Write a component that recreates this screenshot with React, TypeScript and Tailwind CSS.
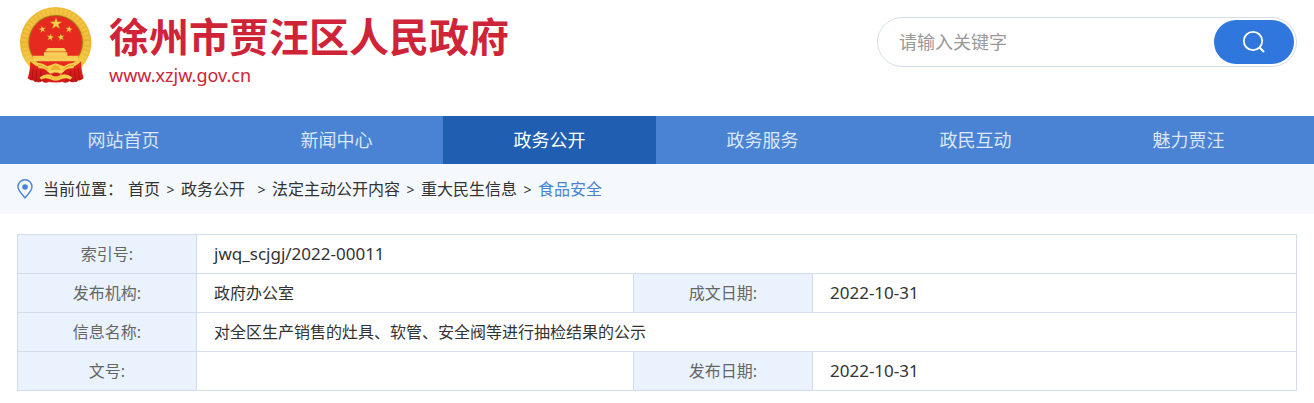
import React from 'react';

const NAV_ITEMS = ['网站首页', '新闻中心', '政务公开', '政务服务', '政民互动', '魅力贾汪'];
const ACTIVE_ITEM = '政务公开';

const CRUMBS = ['首页', '政务公开', '法定主动公开内容', '重大民生信息'];

const STAR = 'M0 -10 L2.4 -3.2 L9.5 -3.1 L3.8 1.2 L5.9 8.1 L0 4 L-5.9 8.1 L-3.8 1.2 L-9.5 -3.1 L-2.4 -3.2 Z';

const Emblem: React.FC = () => (
  <svg viewBox="30 15 216 234" className="w-[72px] h-[78px] shrink-0" aria-hidden="true">
    <defs>
      <linearGradient id="gold" x1="0" y1="0" x2="0" y2="1">
        <stop offset="0" stopColor="#efbc38" />
        <stop offset="0.5" stopColor="#eab32c" />
        <stop offset="1" stopColor="#f8d04a" />
      </linearGradient>
      <linearGradient id="drape" x1="0" y1="0" x2="0" y2="1">
        <stop offset="0" stopColor="#e8281f" />
        <stop offset="1" stopColor="#c41417" />
      </linearGradient>
    </defs>
    {/* Wreath */}
    <circle cx="137" cy="125" r="107" fill="url(#gold)" />
    <circle cx="137" cy="125" r="94" fill="none" stroke="#fbdc6c" strokeWidth="16" strokeDasharray="7 6" opacity="0.35" />
    <circle cx="137" cy="124" r="82" fill="#a8741c" />
    <circle cx="137" cy="124" r="79" fill="#e62a20" />
    {/* Stars */}
    <g fill="#f8cf4c" stroke="#b9751a" strokeWidth="0.6">
      <path d={STAR} transform="translate(138 68) scale(1.9)" />
      <path d={STAR} transform="translate(97 85) rotate(-12) scale(1.1)" />
      <path d={STAR} transform="translate(177 85) rotate(12) scale(1.1)" />
      <path d={STAR} transform="translate(121 109) rotate(10) scale(1.1)" />
      <path d={STAR} transform="translate(153 109) rotate(-10) scale(1.1)" />
    </g>
    {/* Gate */}
    <path d="M113 141 H162 L170 151 H105 Z" fill="#f8d05a" />
    <path d="M109 151 H166 V155 H109 Z" fill="#e3aa3a" />
    <path d="M102 154 H172 V164 H206 L202 181 H72 L68 164 H102 Z" fill="#f9ce58" />
    <path d="M72 168 H203" stroke="#eebb45" strokeWidth="2" />
    {/* Drapery */}
    <path d="M61 181 Q80 203 112 199 L116 244 Q100 247 96 240 Q90 246 80 242 Q74 245 69 238 Q61 240 53 232 Q60 211 61 181 Z" fill="url(#drape)" />
    <path d="M213 181 Q194 203 162 199 L158 244 Q174 247 178 240 Q184 246 194 242 Q200 245 205 238 Q213 240 221 232 Q214 211 213 181 Z" fill="url(#drape)" />
    <path d="M70 200 L66 235 M80 206 L78 239 M92 210 V240 M204 200 L208 235 M194 206 L196 239 M182 210 V240" stroke="#9d0d12" strokeWidth="2" />
    <path d="M105 213 H169 L165 241 Q137 248 109 241 Z" fill="#d41c1b" />
    {/* Ribbon and cog */}
    <path d="M80 186 Q98 185 112 196 L137 187 L162 196 Q176 185 196 186 L190 202 Q171 200 162 211 H112 Q103 200 86 202 Z" fill="#f8cd4a" />
    <path d="M84 192 Q101 193 114 204 M192 192 Q173 193 160 204" stroke="#c88a1f" strokeWidth="2" fill="none" />
    <path d="M123 201 L129 193 L137 190 L145 193 L151 201 L155 210 H119 Z" fill="#eeb02c" stroke="#fbdc6c" strokeWidth="2" />
    <path d="M112 211 Q137 201 162 211 L154 218 Q137 211 120 218 Z" fill="#fbd65c" />
    <path d="M89 229 Q108 216 121 221 L126 236 Q104 227 93 236 Z" fill="#f8cd4a" />
    <path d="M187 229 Q168 216 155 221 L148 236 Q170 227 181 236 Z" fill="#f8cd4a" />
    <path d="M118 222 L128 217 H147 L157 222 L149 237 Q137 242 125 237 Z" fill="#f3c142" />
    <path d="M122 221 L131 216 H144 L153 221 L143 226 H132 Z" fill="#d41c1b" />
  </svg>
);

const Header: React.FC = () => (
  <header className="max-w-[1280px] mx-auto h-[116px] flex items-start justify-between">
    <a href="#" className="flex items-start gap-[17px] pt-[6px] pl-[3px] text-[#cf2338]">
      <Emblem />
      <div className="pt-[6px]">
        <h1 className="text-[40px] leading-[50px] font-bold whitespace-nowrap">徐州市贾汪区人民政府</h1>
        <p className="text-[18px] leading-[26px]">www.xzjw.gov.cn</p>
      </div>
    </a>
    <form className="mt-[17px] w-[420px] h-[50px] p-[2px] pl-[21px] flex border border-[#d4dfeb] rounded-full">
      <input
        type="text"
        aria-label="请输入关键字"
        placeholder="请输入关键字"
        className="flex-1 min-w-0 text-[18px] outline-none placeholder:text-[#999999]"
      />
      <button type="button" aria-label="搜索" className="w-20 h-11 rounded-full bg-[#2f77dc] flex items-center justify-center">
        <svg viewBox="0 0 24 24" className="w-6 h-6" fill="none" stroke="#fff" strokeWidth="1.8" strokeLinecap="round">
          <circle cx="11" cy="11" r="9.2" />
          <path d="M17.8 17.8 L21.5 21.5" strokeWidth="2" />
        </svg>
      </button>
    </form>
  </header>
);

const Nav: React.FC = () => (
  <nav className="bg-[#4a83d3]">
    <div className="max-w-[1280px] mx-auto pr-[2px] grid grid-cols-6">
      {NAV_ITEMS.map((item) => (
        <a
          key={item}
          href="#"
          className={
            item === ACTIVE_ITEM
              ? 'h-12 leading-[48px] text-center text-[18px] bg-[#205eb2] text-white'
              : 'h-12 leading-[48px] text-center text-[18px] text-[#dbe6f6]'
          }
        >
          {item}
        </a>
      ))}
    </div>
  </nav>
);

const Breadcrumb: React.FC = () => (
  <div className="bg-[#f5f8fd]">
    <div className="max-w-[1280px] mx-auto h-[50px] flex items-center text-[16px] whitespace-nowrap">
      <svg viewBox="0 0 16 20" className="w-4 h-5 mr-[10px]" fill="none" aria-hidden="true">
        <path d="M8 18.8 C5.5 15.5 1 12 1 7.8 A7 7 0 0 1 15 7.8 C15 12 10.5 15.5 8 18.8 Z" stroke="#4a83d3" strokeWidth="1.4" />
        <circle cx="8" cy="8" r="2.8" fill="#4a83d3" />
      </svg>
      <span className="mr-[5px]">当前位置：</span>
      {CRUMBS.map((crumb) => (
        <React.Fragment key={crumb}>
          <a href="#" className={crumb === ACTIVE_ITEM ? 'mr-[6px]' : ''}>{crumb}</a>
          <span className="w-[21px] text-center text-[14px]">&gt;</span>
        </React.Fragment>
      ))}
      <a href="#" className="text-[#4a83d3]">食品安全</a>
    </div>
  </div>
);

const Label: React.FC<{ children: string }> = ({ children }) => (
  <th scope="row" className="h-[39px] border border-[#d3dde9] bg-[#eaf3fd] font-normal text-[#666666]">
    {children}
  </th>
);

interface ValueProps {
  children?: string;
  wide?: boolean;
  latin?: boolean;
}

const Value: React.FC<ValueProps> = ({ children, wide, latin }) => (
  <td
    colSpan={wide ? 3 : 1}
    className={`h-[39px] border border-[#d3dde9] pl-[17px] leading-6 ${latin ? 'text-[17px]' : 'text-[16px]'}`}
  >
    {children}
  </td>
);

const InfoTable: React.FC = () => (
  <div className="max-w-[1280px] mx-auto pt-5">
    <table className="w-full table-fixed border-collapse text-[16px] leading-6">
      <colgroup>
        <col className="w-[179px]" />
        <col className="w-[437px]" />
        <col className="w-[179px]" />
        <col />
      </colgroup>
      <tbody>
        <tr>
          <Label>索引号:</Label>
          <Value wide latin>jwq_scjgj/2022-00011</Value>
        </tr>
        <tr>
          <Label>发布机构:</Label>
          <Value>政府办公室</Value>
          <Label>成文日期:</Label>
          <Value latin>2022-10-31</Value>
        </tr>
        <tr>
          <Label>信息名称:</Label>
          <Value wide>对全区生产销售的灶具、软管、安全阀等进行抽检结果的公示</Value>
        </tr>
        <tr>
          <Label>文号:</Label>
          <Value />
          <Label>发布日期:</Label>
          <Value latin>2022-10-31</Value>
        </tr>
      </tbody>
    </table>
  </div>
);

export default function App() {
  return (
    <div className="bg-white text-[#333333] font-['Noto_Sans','Noto_Sans_CJK_SC',sans-serif]">
      <Header />
      <Nav />
      <Breadcrumb />
      <InfoTable />
    </div>
  );
}
